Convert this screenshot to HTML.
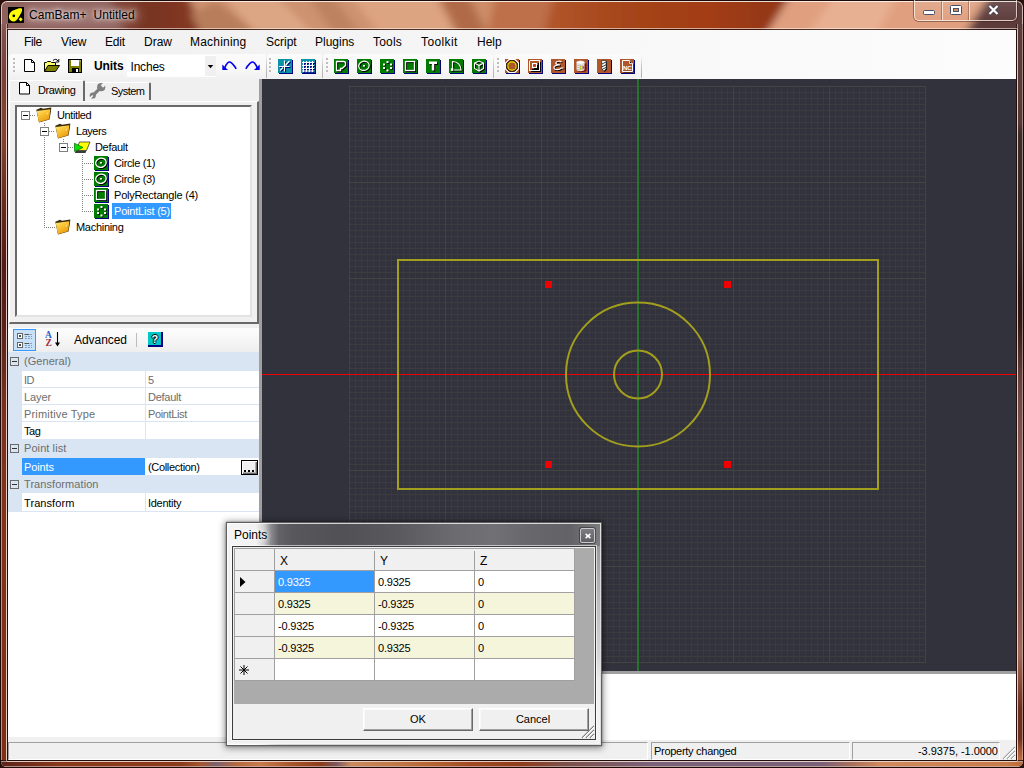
<!DOCTYPE html>
<html><head><meta charset="utf-8"><title>CamBam+ Untitled</title>
<style>
html,body{margin:0;padding:0}
body{width:1024px;height:768px;overflow:hidden;position:relative;font-family:"Liberation Sans",sans-serif;font-size:11px;color:#000;background:#2a0f0a}
.a{position:absolute}
.t{position:absolute;white-space:pre;line-height:14px}
svg{position:absolute;overflow:visible}
/* frame */
#frame{left:0;top:0;width:1022px;height:766px;border:1px solid #1c0b08;border-radius:7px 7px 6px 6px;overflow:hidden;
background:
linear-gradient(90deg,#8d5f5a 0,#8a5852 60px,#7a4436 110px,#6e3424 150px,#7c3a24 200px,#8f4a30 240px,#b47c5c 290px,#cf946f 340px,#d99d7c 400px,#e2a684 470px,#d68e66 520px,#c06a3e 560px,#ab4e22 600px,#a0431b 650px,#8f3a17 700px,#96411d 730px,#c47a52 765px,#dd9e7c 800px,#e0a283 850px,#d8946f 910px,#d08a68 960px,#7a4a44 985px,#5e3c3c 1000px,#5a3a3a 1024px);}
#frame:after{content:"";position:absolute;left:0;top:0;right:0;bottom:0;border:1px solid rgba(255,240,235,.7);border-top-color:rgba(255,250,245,.85);border-radius:6px 6px 5px 5px}
#sideL{left:1px;top:24px;width:7px;height:737px;background:linear-gradient(90deg,rgba(225,205,200,.62) 0,rgba(225,205,200,.62) 1px,transparent 1px,transparent 5px,rgba(225,205,200,.62) 5px,rgba(225,205,200,.62) 6px,rgba(40,20,16,.8) 6px),linear-gradient(180deg,#8b5c58 0,#80504a 10px,#7a4038 50px,#884230 110px,#6a2a1c 180px,#561c14 240px,#5c2218 310px,#7a3020 380px,#82341a 480px,#7e3016 737px)}
#sideR{left:1016px;top:24px;width:7px;height:737px;background:linear-gradient(90deg,rgba(40,20,16,.8) 0,rgba(40,20,16,.8) 1px,rgba(225,205,200,.55) 1px,rgba(225,205,200,.55) 2px,transparent 2px,transparent 6px,rgba(225,205,200,.55) 6px),linear-gradient(180deg,#5d3b3b 0,#5a3a39 98px,#3e2c2a 110px,#3a2826 220px,#2c1412 270px,#341815 300px,#6a4442 360px,#8a5a58 440px,#8a5450 560px,#a06a5c 630px,#8a4a38 660px,#6e2c1e 685px,#70301e 715px,#a85832 728px,#c07040 737px)}
#bot{left:1px;top:760px;width:1022px;height:7px;border-radius:0 0 6px 6px;background:
linear-gradient(180deg,rgba(40,20,16,.9) 0,rgba(40,20,16,.9) 1px,rgba(200,170,160,.8) 1px,rgba(200,170,160,.8) 2px,rgba(0,0,0,0) 2px,rgba(0,0,0,0) 6px,rgba(215,180,170,.7) 6px),
linear-gradient(90deg,#5c241b 0,#8a3a1c 60px,#8c3b1b 180px,#a3562f 200px,#7c6070 215px,#b4693f 235px,#c77a4b 260px,#a8562c 290px,#8d3d1b 320px,#7b5560 335px,#c98a5e 350px,#bf7644 400px,#b56532 430px,#a04a22 470px,#8f3d1b 520px,#7d5048 560px,#7a627a 650px,#7a6078 820px,#a8705c 850px,#d08a5c 880px,#cc8050 960px,#c87a48 1005px,#b86838 1024px)}
#client{left:8px;top:30px;width:1008px;height:730px;background:#f0f0f0}
#cedge{left:6px;top:28px;width:1010px;height:732px;border:1px solid rgba(255,240,235,.6);border-radius:2px}
#cedge2{left:7px;top:29px;width:1008px;height:730px;border:1px solid rgba(30,10,5,.75)}

/* menu */
#menubar{left:8px;top:30px;width:1008px;height:49px;background:linear-gradient(90deg,#f0f0f0 0,#f3f3f3 30%,#f8f8f8 60%,#fcfcfc 100%)}
.m{position:absolute;top:35px;font-size:12px;line-height:14px;white-space:pre;color:#000}
/* toolbars */
.tb{position:absolute;top:54px;height:24px;background:linear-gradient(180deg,#fbfbfb 0,#f8f8f8 60%,#f1f1f1 100%);border-radius:3px 3px 3px 3px}
.grip{position:absolute;top:58px;width:2px;height:14px;background:repeating-linear-gradient(180deg,#bdbdbd 0,#bdbdbd 2px,transparent 2px,transparent 4px)}
.ic{position:absolute;top:59px;width:14px;height:14px;box-shadow:1px 1px 0 #000080}
.tbs{position:absolute;top:56px;width:1px;height:22px;background:linear-gradient(180deg,rgba(190,190,190,0),#c2c2c2 50%,#b0b0b0)}
.g{background:#008000}.o{background:#b4501e}.c{background:#0090b8}

/* left panel */
.tr{position:absolute;font-size:11px;line-height:14px;white-space:pre;letter-spacing:-.3px}
.dot{position:absolute;background-image:repeating-linear-gradient(90deg,#808080 0,#808080 1px,transparent 1px,transparent 2px);height:1px}
.vdot{position:absolute;background-image:repeating-linear-gradient(180deg,#808080 0,#808080 1px,transparent 1px,transparent 2px);width:1px}
.box{position:absolute;width:7px;height:7px;border:1px solid #808080;background:#fff}
.box:after{content:"";position:absolute;left:1px;top:3px;width:5px;height:1px;background:#000}
.pg{position:absolute;font-size:11px;line-height:14px;white-space:pre;letter-spacing:-.25px}
.cat{position:absolute;left:8px;width:251px;background:#d9e5f2}
.row{position:absolute;left:22px;width:237px;background:#fff}
.pbox{position:absolute;left:10px;width:7px;height:7px;border:1px solid #6a6a6a;background:transparent}
.pbox:after{content:"";position:absolute;left:1px;top:3px;width:5px;height:1px;background:#333}

/* canvas */
#canvas{left:262px;top:79px;width:754px;height:592px;background:#32323c;overflow:hidden}
#grid{position:absolute;left:0;top:0}
.pt{position:absolute;width:7px;height:7px;background:#f00000}
/* status */
.sp{position:absolute;top:742px;height:18px;box-sizing:border-box;border:1px solid;border-color:#a0a0a0 #fff #fff #a0a0a0}
/* dialog */
.cell{position:absolute;height:21px;width:99px;background:#fff}
.alt{background:#f5f5dc}
.hd{position:absolute;background:#f0f0f0}
.dt{position:absolute;font-size:11px;line-height:14px;white-space:pre;letter-spacing:-.2px}
.btn{position:absolute;top:708px;height:23px;box-sizing:border-box;background:#f0f0f0;border:1px solid;border-color:#fff #696969 #696969 #fff;box-shadow:inset -1px -1px 0 #a0a0a0,inset 1px 1px 0 #f8f8f8;font-size:11px;line-height:20px;text-align:center}
</style></head><body>
<div id="frame" class="a"><svg style="left:0;top:0" width="1024" height="31" viewBox="0 0 1024 31"><defs><filter id="bl" x="-5%" y="-100%" width="110%" height="300%"><feGaussianBlur stdDeviation="4 3"/></filter>
<linearGradient id="gB" x1="0" x2="1"><stop offset="0" stop-color="#80453a"/><stop offset=".4" stop-color="#773322"/><stop offset="1" stop-color="#8a3b1f"/></linearGradient>
<linearGradient id="gD" x1="0" x2="1"><stop offset="0" stop-color="#b3592e"/><stop offset=".3" stop-color="#a6461b"/><stop offset=".65" stop-color="#a23c13"/><stop offset="1" stop-color="#8b3616"/></linearGradient>
</defs>
<g filter="url(#bl)">
<rect x="-30" y="-30" width="1100" height="90" fill="#8e605c"/>
<polygon points="98,-30 185,-30 215,60 135,60" fill="url(#gB)"/>
<polygon points="178,-30 560,-30 520,60 212,60" fill="#cd926f"/>
<polygon points="200,-30 250,-30 340,60 280,60" fill="#dca684"/>
<polygon points="190,14 215,0 290,60 215,60" fill="#b87e5c"/>
<polygon points="290,-30 312,-30 380,60 352,60" fill="#bd825e"/>
<polygon points="330,-30 420,-30 470,60 400,60" fill="#dda482"/>
<polygon points="425,-30 455,-30 500,60 470,60" fill="#b06a46"/>
<polygon points="460,-30 530,-30 520,60 500,60" fill="#cd8d68"/>
<polygon points="500,-30 600,-30 580,60 480,60" fill="#bd7048"/><polygon points="560,-30 805,-30 748,60 535,60" fill="url(#gD)"/>
<polygon points="805,-30 1003,-30 947,60 748,60" fill="#e0a080"/>
<polygon points="850,-30 910,-30 860,60 790,60" fill="#e8b092"/>
<polygon points="1003,-30 1060,-30 1060,60 947,60" fill="#5d3b3b"/>
</g></svg></div>
<div id="sideL" class="a"></div><div id="sideR" class="a"></div><div id="bot" class="a"></div>
<div id="cedge" class="a"></div><div id="cedge2" class="a"></div>
<div id="client" class="a"></div>

<div id="menubar" class="a"></div>
<span class="m" style="left:24px;letter-spacing:-.4px">File</span>
<span class="m" style="left:61px;letter-spacing:-.1px">View</span>
<span class="m" style="left:105px;letter-spacing:-.2px">Edit</span>
<span class="m" style="left:144px">Draw</span>
<span class="m" style="left:190px;letter-spacing:.2px">Machining</span>
<span class="m" style="left:266px">Script</span>
<span class="m" style="left:315px">Plugins</span>
<span class="m" style="left:373px;letter-spacing:.2px">Tools</span>
<span class="m" style="left:421px;letter-spacing:.4px">Toolkit</span>
<span class="m" style="left:477px">Help</span>
<!-- toolbar 1 -->
<div class="tb" style="left:9px;width:257px"></div>
<div class="tbs" style="left:266px"></div>
<div class="grip" style="left:13px"></div>
<svg style="left:24px;top:59px" width="12" height="14" viewBox="0 0 12 14"><path d="M.5.5H7.500L10.500 3.500V12.500H.5Z" fill="#fff" stroke="#000"/><path d="M7.500.500V3.500H10.500" fill="none" stroke="#000"/></svg>
<svg style="left:44px;top:58px" width="17" height="15" viewBox="0 0 17 15"><path d="M.5 13.500V4.500H2.500L3.500 3.500H6.500L7.500 4.500H11.500V7.500" fill="#ffff66" stroke="#000"/><path d="M.5 13.500L4 7.500H15.500L11.500 13.500Z" fill="#808000" stroke="#000"/><path d="M9 2.500C10.500 .8 13 1 14 3" fill="none" stroke="#000"/><path d="M14.800 1V4H11.800" fill="none" stroke="#000"/></svg>
<svg style="left:68px;top:59px" width="15" height="15" viewBox="0 0 15 15"><rect x=".5" y=".5" width="13" height="13" fill="#808000" stroke="#000"/><rect x="3" y="1" width="8" height="6" fill="#fff"/><rect x="4" y="9" width="7" height="4.500" fill="#000"/><rect x="8" y="10" width="2" height="3" fill="#fff"/><rect x="11.500" y="1.500" width="1" height="1" fill="#fff"/></svg>
<span class="m" style="left:94px;top:59px;font-weight:bold;letter-spacing:-.1px">Units</span>
<div class="a" style="left:127px;top:55px;width:89px;height:22px;background:#fff"></div>
<div class="a" style="left:205px;top:56px;width:11px;height:20px;background:#f0f0f0"></div>
<span class="m" style="left:130.500px;top:60px;letter-spacing:-.2px">Inches</span>
<svg style="left:207px;top:65px" width="7" height="4"><path d="M.7 0H6.300L3.500 3.200Z" fill="#000"/></svg>
<svg style="left:222px;top:61px" width="15" height="10" viewBox="0 0 15 10"><path d="M2.800 6.800C4.500 2.500 6.500 .3 8.500 1.200C10.500 2.200 12.500 5 14.200 7.800" fill="none" stroke="#0000f0" stroke-width="1.600"/><path d="M.3 3.500V9H6Z" fill="#0000f0"/></svg>
<svg style="left:245px;top:61px" width="15" height="10" viewBox="0 0 15 10"><path d="M12.200 6.800C10.500 2.500 8.500 .3 6.500 1.200C4.500 2.200 2.500 5 .8 7.800" fill="none" stroke="#0000f0" stroke-width="1.600"/><path d="M14.700 3.500V9H9Z" fill="#0000f0"/></svg>
<!-- toolbar 2 -->
<div class="tb" style="left:267px;width:55px"></div>
<div class="tbs" style="left:322px"></div>
<div class="grip" style="left:269px"></div>
<div class="ic" style="left:278px;background:#0a93a6"></div><svg style="left:278px;top:59px" width="14" height="14" viewBox="0 0 14 14"><g transform="translate(1,1)"><path d="M6.500 1.500V12.500M1 7.500H11.500M11.500 2L8 5.500M2 11.500L5 8.500" stroke="#000080" stroke-width="1.200" fill="none"/></g><path d="M6.500 1.500V12.500M1 7.500H11.500M11.500 2L8 5.500M2 11.500L5 8.500" stroke="#fff" stroke-width="1.200" fill="none"/><path d="M6.800 7L8 4.500L9.500 6Z" fill="#fff"/></svg>
<div class="ic" style="left:301px;background:#0a93a6"></div><svg style="left:301px;top:59px" width="14" height="14" viewBox="0 0 14 14"><g transform="translate(1,1)"><path d="M1 3.500H13M1 6.500H13M1 9.500H13M1 12H13M2.500 2V13M5.500 2V13M8.500 2V13M11.500 2V13" stroke="#000080" stroke-width="1" fill="none"/></g><path d="M1 3.500H13M1 6.500H13M1 9.500H13M1 12H13M2.500 2V13M5.500 2V13M8.500 2V13M11.500 2V13" stroke="#fff" stroke-width="1.100" fill="none"/></svg>
<!-- toolbar 3 -->
<div class="tb" style="left:323px;width:170px"></div>
<div class="tbs" style="left:493px"></div>
<div class="grip" style="left:326px"></div>
<div class="ic" style="left:334px;background:#007d00"></div><svg style="left:334px;top:59px" width="14" height="14" viewBox="0 0 14 14"><g transform="translate(1,1)"><path d="M2.500 2.500H9.500Q11.500 2.500 11.500 4.500V6.500L8 9.500H6.500V11.500H2.500Z" fill="none" stroke="#000" stroke-width="1.3"/></g><path d="M2.500 2.500H9.500Q11.500 2.500 11.500 4.500V6.500L8 9.500H6.500V11.500H2.500Z" fill="none" stroke="#fff" stroke-width="1.3"/></svg>
<div class="ic" style="left:357px;background:#007d00"></div><svg style="left:357px;top:59px" width="14" height="14" viewBox="0 0 14 14"><g transform="translate(1,1)"><ellipse cx="7" cy="6.800" rx="5.300" ry="4.600" transform="rotate(-15 7 7)" fill="none" stroke="#000" stroke-width="1.200"/></g><ellipse cx="7" cy="6.800" rx="5.300" ry="4.600" transform="rotate(-15 7 7)" fill="none" stroke="#fff" stroke-width="1.200"/><rect x="6.700" y="6.700" width="2" height="1.500" fill="#000"/><rect x="6" y="6" width="2" height="1.600" fill="#fff"/></svg>
<div class="ic" style="left:380px;background:#007d00"></div><svg style="left:380px;top:59px" width="14" height="14" viewBox="0 0 14 14"><rect x="7.3" y="2.8" width="2" height="2" fill="#000"/><rect x="10.8" y="5.3" width="2" height="2" fill="#000"/><rect x="10.8" y="8.8" width="2" height="2" fill="#000"/><rect x="7.3" y="11.3" width="2" height="2" fill="#000"/><rect x="3.8" y="8.8" width="2" height="2" fill="#000"/><rect x="3.8" y="5.3" width="2" height="2" fill="#000"/><rect x="6.5" y="2" width="2" height="2" fill="#fff"/><rect x="10" y="4.5" width="2" height="2" fill="#fff"/><rect x="10" y="8" width="2" height="2" fill="#fff"/><rect x="6.5" y="10.5" width="2" height="2" fill="#fff"/><rect x="3" y="8" width="2" height="2" fill="#fff"/><rect x="3" y="4.5" width="2" height="2" fill="#fff"/></svg>
<div class="ic" style="left:403px;background:#007d00"></div><svg style="left:403px;top:59px" width="14" height="14" viewBox="0 0 14 14"><rect x="3.500" y="3.500" width="9" height="9" fill="none" stroke="#000" stroke-width="1.200"/><rect x="2.500" y="2.500" width="9" height="9" fill="none" stroke="#fff" stroke-width="1.300"/></svg>
<div class="ic" style="left:426px;background:#007d00"></div><svg style="left:426px;top:59px" width="14" height="14" viewBox="0 0 14 14"><g transform="translate(1,1)"><path d="M3 2.500H11V5H8.200V11.500H5.800V5H3Z" fill="#000"/></g><path d="M3 2.500H11V5H8.200V11.500H5.800V5H3Z" fill="#fff"/></svg>
<div class="ic" style="left:449px;background:#007d00"></div><svg style="left:449px;top:59px" width="14" height="14" viewBox="0 0 14 14"><g transform="translate(1,1)"><path d="M3.500 11V2.500C8.500 2.500 12 6 12 11Z" fill="none" stroke="#000" stroke-width="1.2"/></g><path d="M3.500 11V2.500C8.500 2.500 12 6 12 11Z" fill="none" stroke="#fff" stroke-width="1.2"/><rect x="2.500" y="10" width="2.600" height="2.600" fill="#000"/><rect x="1.800" y="9.300" width="2.600" height="2.600" fill="#fff"/></svg>
<div class="ic" style="left:472px;background:#007d00"></div><svg style="left:472px;top:59px" width="14" height="14" viewBox="0 0 14 14"><g transform="translate(1,1)"><path d="M2.500 4L7 2L11.500 4V9.500L7 12L2.500 9.500ZM2.500 4L7 6.500L11.500 4M7 6.500V12" fill="none" stroke="#000" stroke-width="1.1"/></g><path d="M2.500 4L7 2L11.500 4V9.500L7 12L2.500 9.500ZM2.500 4L7 6.500L11.500 4M7 6.500V12" fill="none" stroke="#fff" stroke-width="1.1"/></svg>
<!-- toolbar 4 -->
<div class="tb" style="left:494px;width:147px"></div>
<div class="tbs" style="left:641px"></div>
<div class="grip" style="left:497px"></div>
<div class="ic" style="left:505px;background:#b1552a"></div><svg style="left:505px;top:59px;overflow:hidden" width="14" height="14" viewBox="0 0 14 14"><path d="M4 .6H10L13.400 4V10L10 13.400H4L.6 10V4Z" fill="none" stroke="#fff" stroke-width="1.200"/><path d="M4.500 1.800H9.500L12.200 4.500V9.500L9.500 12.200H4.500L1.800 9.500V4.500Z" fill="none" stroke="#000" stroke-width="1"/><circle cx="7" cy="7" r="4.100" fill="none" stroke="#5a3a00" stroke-width="1.900"/><circle cx="7" cy="7" r="4.100" fill="none" stroke="#ffee00" stroke-width="1.100"/></svg>
<div class="ic" style="left:528px;background:#b1552a"></div><svg style="left:528px;top:59px;" width="14" height="14" viewBox="0 0 14 14"><g shape-rendering="crispEdges"><g fill="none" stroke="#000" stroke-width="1"><path d="M12.500 2.500V12.500H2.500M9.500 5.500V9.500H5.500M10.500 3.500V10.500H3.500"/></g><g fill="none" stroke="#fff" stroke-width="1"><rect x="1.500" y="1.500" width="10" height="10"/><rect x="4.500" y="4.500" width="4" height="4"/></g><rect x="6" y="6" width="1" height="1" fill="#e02000"/><rect x="1" y="1" width="1" height="1" fill="#90a020"/></g></svg>
<div class="ic" style="left:551px;background:#b1552a"></div><svg style="left:551px;top:59px;" width="14" height="14" viewBox="0 0 14 14"><g transform="translate(.8,.8)"><path d="M10.500 3.200C9.500 1.800 5 1.800 4.800 4C4.700 5.800 8 5.800 9 6C5 5.800 2.500 7 3 9C3.500 11.500 8.500 11 10.200 9.200L12.500 8.800" fill="none" stroke="#000" stroke-width="1.200"/></g><path d="M10.500 3.200C9.500 1.800 5 1.800 4.800 4C4.700 5.800 8 5.800 9 6C5 5.800 2.500 7 3 9C3.500 11.500 8.500 11 10.200 9.200L12.500 8.800" fill="none" stroke="#fff" stroke-width="1.200"/></svg>
<div class="ic" style="left:574px;background:#b1552a"></div><svg style="left:574px;top:59px;" width="14" height="14" viewBox="0 0 14 14"><path d="M4 5V12C5 13.500 11 13.500 12.500 11.500V4.500Z" fill="#7a1208"/><path d="M2.500 3.500V10.500C2.500 12.800 10.500 12.800 10.500 10.500V3.500Z" fill="#e4e4e4"/><ellipse cx="6.500" cy="3.500" rx="4" ry="1.700" fill="#fff" stroke="#c4c4c4" stroke-width=".6"/><path d="M3 6.500H7M3 8.500H7M3 10.500H7" stroke="#bbb" stroke-width=".8"/><rect x="6" y="7" width="1.500" height="1.500" fill="#b8c800"/><rect x="6" y="9" width="1.500" height="1.500" fill="#b8c800"/><path d="M8.500 6L10.500 8.500L8.500 11Z" fill="#b1552a"/></svg>
<div class="ic" style="left:597px;background:#b1552a"></div><svg style="left:597px;top:59px;" width="14" height="14" viewBox="0 0 14 14"><path d="M5.500 2.300H10V10.300L7.800 13L5.500 10.300Z" fill="#000"/><path d="M4.700 1.500H9.200V9.700L7 12.300L4.700 9.700Z" fill="#fff" stroke="#111" stroke-width=".6"/><path d="M4.900 5L9 3M4.900 7.800L9 5.800M5.200 10.300L9 8.500" stroke="#000" stroke-width=".75"/></svg>
<div class="ic" style="left:620px;background:#b1552a"></div><svg style="left:620px;top:59px;" width="14" height="14" viewBox="0 0 14 14"><path d="M3.500 2.500H10.500L13.500 5.500V13.500H3.500Z" fill="#000"/><path d="M2.500 1.500H9.500L12.500 4.500V12.500H2.500Z" fill="#b1552a" stroke="#fff" stroke-width="1"/><path d="M9.500 1.500V4.500H12.500" fill="#000" stroke="#fff" stroke-width=".8"/><text x="3.100" y="11.200" font-family="Liberation Sans,sans-serif" font-size="6.200" font-weight="bold" fill="#fff" letter-spacing="-.2">NC</text></svg>
<!-- tabs -->
<div class="a" style="left:9px;top:101px;width:250px;height:223px;border-left:1px solid #fff;border-top:1px solid #fff;box-sizing:border-box;border-right:2px solid #696969;border-bottom:2px solid #696969"></div>
<div class="a" style="left:9px;top:80px;width:76px;height:21px;background:#f0f0f0;border-left:1px solid #fff;border-top:1px solid #fff;box-sizing:border-box;border-right:2px solid #696969;border-radius:2px 2px 0 0"></div>
<div class="a" style="left:85px;top:82px;width:66px;height:18px;border-top:1px solid #fff;box-sizing:border-box;border-right:2px solid #696969;border-radius:0 2px 0 0"></div>
<svg style="left:19px;top:82px" width="12" height="13" viewBox="0 0 12 13"><path d="M.5.500H7.500L10.500 3.500V12H.5Z" fill="#fff" stroke="#000"/><path d="M7.500.500V3.500H10.500" fill="none" stroke="#000"/></svg>
<span class="tr" style="left:38px;top:83px;letter-spacing:-.41px">Drawing</span>
<svg style="left:88.500px;top:83px;overflow:hidden" width="17" height="16" viewBox="0 0 17 16"><path d="M4 12.300L11.500 4.800" stroke="#7f7f7f" stroke-width="3.300" stroke-linecap="round"/><circle cx="3.800" cy="12.500" r="3.100" fill="#7f7f7f"/><path d="M3.300 13L-.5 16.800" stroke="#f0f0f0" stroke-width="1.700" stroke-linecap="round"/><circle cx="12.200" cy="4.200" r="4.100" fill="#7f7f7f"/><path d="M12.900 3.500L17.500 -1.100" stroke="#f0f0f0" stroke-width="3.200"/></svg>
<span class="tr" style="left:111px;top:84px;letter-spacing:-.55px">System</span>
<!-- tree -->
<div class="a" style="left:15px;top:105px;width:237px;height:212px;box-sizing:border-box;background:#fff;border:2px solid;border-color:#696969 #e3e3e3 #e3e3e3 #696969;box-shadow:-0px -0px 0 #a0a0a0"></div>
<div class="vdot" style="left:25px;top:120px;height:0"></div>
<div class="dot" style="left:30px;top:115px;width:6px"></div>
<div class="vdot" style="left:44px;top:123px;height:104px"></div>
<div class="dot" style="left:49px;top:131px;width:6px"></div>
<div class="vdot" style="left:63px;top:139px;height:4px"></div>
<div class="dot" style="left:68px;top:147px;width:6px"></div>
<div class="vdot" style="left:82px;top:155px;height:56px"></div>
<div class="dot" style="left:82px;top:163px;width:12px"></div>
<div class="dot" style="left:82px;top:179px;width:12px"></div>
<div class="dot" style="left:82px;top:195px;width:12px"></div>
<div class="dot" style="left:82px;top:211px;width:12px"></div>
<div class="dot" style="left:44px;top:227px;width:12px"></div>
<div class="box" style="left:21px;top:111px"></div>
<div class="box" style="left:40px;top:127px"></div>
<div class="box" style="left:59px;top:143px"></div>
<svg style="left:36px;top:107px" width="16" height="16" viewBox="0 0 16 16"><defs><linearGradient id="fg36107" x1="0" y1="0" x2=".6" y2="1"><stop offset="0" stop-color="#ffe98a"/><stop offset=".45" stop-color="#fbc535"/><stop offset="1" stop-color="#e99a14"/></linearGradient></defs><path d="M.3 2.800L5 .8L7 1.800L15.300 .6L15 4L13.500 12.500L3 15.600Z" fill="#3a2a0c"/><path d="M.8 4L14.300 2.200L13.200 12.200L2.800 15.300Z" fill="url(#fg36107)"/><path d="M10.500 6.500L12 5.500L11.500 7.500Z" fill="#fff3b0"/></svg><svg style="left:55px;top:123px" width="16" height="16" viewBox="0 0 16 16"><defs><linearGradient id="fg55123" x1="0" y1="0" x2=".6" y2="1"><stop offset="0" stop-color="#ffe98a"/><stop offset=".45" stop-color="#fbc535"/><stop offset="1" stop-color="#e99a14"/></linearGradient></defs><path d="M.3 2.800L5 .8L7 1.800L15.300 .6L15 4L13.500 12.500L3 15.600Z" fill="#3a2a0c"/><path d="M.8 4L14.300 2.200L13.200 12.200L2.800 15.300Z" fill="url(#fg55123)"/><path d="M10.500 6.500L12 5.500L11.500 7.500Z" fill="#fff3b0"/></svg><svg style="left:55px;top:219px" width="16" height="16" viewBox="0 0 16 16"><defs><linearGradient id="fg55219" x1="0" y1="0" x2=".6" y2="1"><stop offset="0" stop-color="#ffe98a"/><stop offset=".45" stop-color="#fbc535"/><stop offset="1" stop-color="#e99a14"/></linearGradient></defs><path d="M.3 2.800L5 .8L7 1.800L15.300 .6L15 4L13.500 12.500L3 15.600Z" fill="#3a2a0c"/><path d="M.8 4L14.300 2.200L13.200 12.200L2.800 15.300Z" fill="url(#fg55219)"/><path d="M10.500 6.500L12 5.500L11.500 7.500Z" fill="#fff3b0"/></svg>
<svg style="left:74px;top:140px" width="17" height="14" viewBox="0 0 17 14"><path d="M2 10.500H12.500L11.500 13H.8Z" fill="#3a3a3a"/><path d="M5.500 2H16L12.500 10.500H2Z" fill="#ffff00" stroke="#222" stroke-width=".7"/><path d="M.5 3.200L9 7.500L.5 11.500Z" fill="#00e400" stroke="#0a6a0a" stroke-width=".7"/></svg>
<div class="a" style="left:94px;top:156px;width:14px;height:14px;background:#007d00;box-shadow:1px 1px 0 #000080"></div><svg style="left:94px;top:156px" width="14" height="14"><g transform="translate(.9,.9)"><ellipse cx="7" cy="6.800" rx="5.300" ry="4.600" transform="rotate(-15 7 7)" fill="none" stroke="#000" stroke-width="1.300"/></g><ellipse cx="7" cy="6.800" rx="5.300" ry="4.600" transform="rotate(-15 7 7)" fill="none" stroke="#fff" stroke-width="1.300"/><rect x="6.700" y="6.700" width="2" height="1.500" fill="#000"/><rect x="6" y="6" width="2" height="1.600" fill="#fff"/></svg><div class="a" style="left:94px;top:172px;width:14px;height:14px;background:#007d00;box-shadow:1px 1px 0 #000080"></div><svg style="left:94px;top:172px" width="14" height="14"><g transform="translate(.9,.9)"><ellipse cx="7" cy="6.800" rx="5.300" ry="4.600" transform="rotate(-15 7 7)" fill="none" stroke="#000" stroke-width="1.300"/></g><ellipse cx="7" cy="6.800" rx="5.300" ry="4.600" transform="rotate(-15 7 7)" fill="none" stroke="#fff" stroke-width="1.300"/><rect x="6.700" y="6.700" width="2" height="1.500" fill="#000"/><rect x="6" y="6" width="2" height="1.600" fill="#fff"/></svg>
<div class="a" style="left:94px;top:188px;width:14px;height:14px;background:#007d00;box-shadow:1px 1px 0 #000080"></div>
<svg style="left:94px;top:188px" width="14" height="14"><rect x="3.500" y="3.500" width="9" height="9" fill="none" stroke="#000" stroke-width="1.200"/><rect x="2.500" y="2.500" width="9" height="9" fill="none" stroke="#fff" stroke-width="1.300"/></svg>
<div class="a" style="left:94px;top:204px;width:14px;height:14px;background:#007d00;box-shadow:1px 1px 0 #000080"></div>
<svg style="left:94px;top:204px" width="14" height="14"><rect x="7.3" y="2.8" width="2" height="2" fill="#000"/><rect x="10.8" y="5.3" width="2" height="2" fill="#000"/><rect x="10.8" y="8.8" width="2" height="2" fill="#000"/><rect x="7.3" y="11.3" width="2" height="2" fill="#000"/><rect x="3.8" y="8.8" width="2" height="2" fill="#000"/><rect x="3.8" y="5.3" width="2" height="2" fill="#000"/><rect x="6.5" y="2" width="2" height="2" fill="#fff"/><rect x="10" y="4.5" width="2" height="2" fill="#fff"/><rect x="10" y="8" width="2" height="2" fill="#fff"/><rect x="6.5" y="10.5" width="2" height="2" fill="#fff"/><rect x="3" y="8" width="2" height="2" fill="#fff"/><rect x="3" y="4.5" width="2" height="2" fill="#fff"/></svg>
<span class="tr" style="left:57px;top:108px;letter-spacing:-0.37px;">Untitled</span>
<span class="tr" style="left:76px;top:124px;letter-spacing:-0.46px;">Layers</span>
<span class="tr" style="left:95px;top:140px;letter-spacing:-0.32px;">Default</span>
<span class="tr" style="left:114px;top:156px;letter-spacing:-0.36px;">Circle (1)</span>
<span class="tr" style="left:114px;top:172px;letter-spacing:-0.36px;">Circle (3)</span>
<span class="tr" style="left:114px;top:188px;letter-spacing:-0.2px;">PolyRectangle (4)</span>
<div class="a" style="left:112px;top:203px;width:59px;height:16px;background:#3399ff"></div>
<span class="tr" style="left:114px;top:204px;letter-spacing:-0.21px;color:#fff">PointList (5)</span>
<span class="tr" style="left:76px;top:220px;letter-spacing:-0.29px;">Machining</span>
<!-- splitter -->
<div class="a" style="left:259px;top:79px;width:3px;height:595px;background:#a0a0a0"></div>
<!-- property grid -->
<div class="a" style="left:8px;top:324px;width:251px;height:413px;background:#fff"></div>
<div class="a" style="left:8px;top:324px;width:251px;height:4px;background:#f0f0f0"></div>
<div class="a" style="left:8px;top:328px;width:251px;height:24px;background:linear-gradient(180deg,#fdfdfd 0,#f6f6f6 50%,#eeeeee 100%)"></div>
<div class="a" style="left:13px;top:329px;width:23px;height:22px;box-sizing:border-box;border:1px solid #3399ff;background:#c9e0f9"></div>
<svg style="left:17px;top:333px" width="16" height="15" viewBox="0 0 16 15"><g fill="#fff" stroke="#666" stroke-width="1"><rect x=".5" y=".5" width="5" height="5"/><rect x=".5" y="9.500" width="5" height="5"/></g><path d="M2 3H4M3 2V4M2 12H4M3 11V13" stroke="#111" stroke-width="1"/><path d="M7.500 1.500H12M7.500 10.500H12" stroke="#555" stroke-width="1"/><path d="M8 3.500H15M8 5.500H15M8 12.500H15M8 14.500H15" stroke="#7f9fc5" stroke-width="1" stroke-dasharray="2 1"/><path d="M12.500 1.500H15M12.500 10.500H15" stroke="#7f9fc5" stroke-width="1"/></svg>
<span class="a" style="left:45px;top:331px;font:bold 9.500px 'Liberation Serif',serif;color:#2f5fd0;line-height:9px">A</span>
<span class="a" style="left:45.500px;top:339px;font:bold 9.500px 'Liberation Serif',serif;color:#9c3040;line-height:9px">Z</span>
<svg style="left:54px;top:332px" width="7" height="15"><path d="M3.500 0V13" stroke="#000" stroke-width="1.100"/><path d="M1 10.500L3.500 14.500L6 10.500Z" fill="#000"/></svg>
<span class="m" style="left:74px;top:333px;letter-spacing:-.05px">Advanced</span>
<div class="a" style="left:136px;top:333px;width:1px;height:14px;background:#bdbdbd"></div>
<div class="a" style="left:148px;top:332px;width:13px;height:13px;background:#00c8c8;box-shadow:1px 1px 0 1px #000080"></div>
<span class="a" style="left:151.500px;top:332.500px;font:bold 11px 'Liberation Sans',sans-serif;line-height:12px;color:#fff;text-shadow:1px 0 0 #000,-1px 0 0 #000,0 1px 0 #000,0 -1px 0 #000">?</span>
<div class="cat" style="top:352px;height:160px"></div>
<div class="row" style="top:371px;height:16px"></div>
<div class="row" style="top:388px;height:16px"></div>
<div class="row" style="top:405px;height:16px"></div>
<div class="row" style="top:422px;height:17px"></div>
<div class="row" style="top:458px;height:17px"></div>
<div class="row" style="top:493px;height:18px"></div>
<div class="a" style="left:145px;top:371px;width:1px;height:68px;background:#d9e5f2"></div>
<div class="a" style="left:145px;top:493px;width:1px;height:18px;background:#d9e5f2"></div>
<div class="a" style="left:22px;top:458px;width:123px;height:17px;background:#3399ff"></div>
<div class="pbox" style="top:357px"></div><div class="pbox" style="top:444px"></div><div class="pbox" style="top:480px"></div>
<span class="pg" style="left:24px;top:354px;letter-spacing:0.05px;color:#6d6d6d;">(General)</span><span class="pg" style="left:24px;top:373px;letter-spacing:-0.5px;color:#6d6d6d;">ID</span><span class="pg" style="left:148px;top:373px;letter-spacing:0px;color:#6d6d6d;">5</span><span class="pg" style="left:24px;top:390px;letter-spacing:-0.07px;color:#6d6d6d;">Layer</span><span class="pg" style="left:148px;top:390px;letter-spacing:-0.27px;color:#6d6d6d;">Default</span><span class="pg" style="left:24px;top:407px;letter-spacing:0.17px;color:#6d6d6d;">Primitive Type</span><span class="pg" style="left:148px;top:407px;letter-spacing:-0.36px;color:#6d6d6d;">PointList</span><span class="pg" style="left:24px;top:424px;letter-spacing:-0.38px;">Tag</span><span class="pg" style="left:24px;top:441px;letter-spacing:0.08px;color:#6d6d6d;">Point list</span><span class="pg" style="left:24px;top:460px;letter-spacing:-0.13px;color:#fff;">Points</span><span class="pg" style="left:148px;top:460px;letter-spacing:-0.33px;">(Collection)</span><div class="a" style="left:241px;top:460px;width:17px;height:15px;box-sizing:border-box;border:1px solid #000;background:#f0f0f0;box-shadow:inset 1px 1px 0 #fff,inset -1px -1px 0 #6a6a6a,inset -2px -2px 0 #b0b0b0"></div><div class="a" style="left:244px;top:470px;width:2px;height:2px;background:#000;box-shadow:4px 0 0 #000,8px 0 0 #000"></div><span class="pg" style="left:24px;top:477px;letter-spacing:0.07px;color:#6d6d6d;">Transformation</span><span class="pg" style="left:24px;top:496px;letter-spacing:0.08px;">Transform</span><span class="pg" style="left:148px;top:496px;letter-spacing:-0.28px;">Identity</span>
<!-- canvas -->
<div id="canvas" class="a">
<svg id="grid" width="754" height="592" shape-rendering="crispEdges"><defs><pattern id="pm" x="3" y="1" width="6" height="6" patternUnits="userSpaceOnUse"><rect x="0" y="0" width="1" height="6" fill="#39393e"/><rect x="0" y="0" width="6" height="1" fill="#3b3b40"/></pattern><pattern id="pM" x="87" y="7" width="96" height="96" patternUnits="userSpaceOnUse"><rect x="0" y="0" width="1" height="96" fill="#424241"/><rect x="0" y="0" width="96" height="1" fill="#444443"/></pattern></defs><rect x="87" y="7" width="577" height="577" fill="url(#pm)"/><rect x="87" y="7" width="577" height="577" fill="url(#pM)"/></svg>
<div class="a" style="left:375px;top:0;width:2px;height:592px;background:#27722c"></div>
<div class="a" style="left:0;top:295px;width:754px;height:1px;background:#f00000"></div>
<svg style="left:0;top:0" width="754" height="592"><g fill="none" stroke="#a29e1e" stroke-width="2"><rect x="136" y="181" width="480" height="229"/><circle cx="376" cy="295.500" r="72"/><circle cx="376" cy="295.500" r="24"/></g></svg>
<div class="pt" style="left:283px;top:202px"></div><div class="pt" style="left:462px;top:202px"></div>
<div class="pt" style="left:283px;top:382px"></div><div class="pt" style="left:462px;top:382px"></div>
</div>
<div class="a" style="left:259px;top:671px;width:757px;height:3px;background:#a0a0a0"></div>
<div class="a" style="left:259px;top:674px;width:757px;height:66px;background:#fff"></div>
<!-- status bar -->
<div class="sp" style="left:8px;width:640px"></div>
<div class="sp" style="left:651px;width:199px"></div>
<div class="sp" style="left:852px;width:148px"></div>
<span class="dt" style="left:654px;top:744px;letter-spacing:-.28px">Property changed</span>
<span class="dt" style="left:918px;top:744px;letter-spacing:-.05px">-3.9375, -1.0000</span>
<svg style="left:1002px;top:746px" width="13" height="13"><path d="M1 13L13 1M5 13L13 5M9 13L13 9" stroke="#a0a0a0" stroke-width="1.200"/><path d="M2 13L13 2M6 13L13 6M10 13L13 10" stroke="#fff" stroke-width="1"/></svg>

<!-- dialog -->
<div class="a" style="left:226px;top:522px;width:376px;height:224px;box-sizing:border-box;border:1px solid #5f5f5f;box-shadow:0 1px 7px 1px rgba(0,0,0,.45), 0 0 2px rgba(0,0,0,.4);
background:linear-gradient(90deg,#f4f4f4 0,#f2f2f2 29px,#cfcfd1 37px,#8a8a8e 44px,#626267 52px,#57575c 66px,#505055 114px,#59595e 171px,#6b6b70 228px,#707075 266px,#66666b 305px,#626267 343px,#7c7c80 372px)"></div>
<div class="a" style="left:227px;top:523px;width:374px;height:222px;box-sizing:border-box;border:1px solid rgba(255,255,255,.75)"></div>
<div class="a" style="left:228px;top:546px;width:4px;height:198px;background:#f2f2f2"></div>
<div class="a" style="left:228px;top:740px;width:372px;height:4px;background:linear-gradient(180deg,#e9e9e9,#f6f6f6)"></div>
<div class="a" style="left:596px;top:546px;width:4px;height:198px;background:linear-gradient(180deg,#9a9a9e 0,#b8b8bb 50px,#d6d6d8 110px,#eeeeee 135px,#f4f4f4 100%)"></div>
<div class="a" style="left:231px;top:545px;width:366px;height:196px;box-sizing:border-box;border:1px solid rgba(255,255,255,.6)"></div>
<div class="a" style="left:232px;top:546px;width:364px;height:194px;box-sizing:border-box;border:1px solid #3c3c3c;background:#f0f0f0"></div>
<span class="m" style="left:234px;top:528px;letter-spacing:0px;text-shadow:0 0 6px #fff,0 0 4px #fff">Points</span>
<div class="a" style="left:580px;top:528px;width:15px;height:15px;box-sizing:border-box;border:1px solid #c9c9cc;border-radius:2px;box-shadow:0 0 0 1px rgba(40,40,40,.55);background:linear-gradient(180deg,#7d7d82,#5e5e63)"></div>
<svg style="left:585px;top:533px" width="6" height="6"><path d="M.6 .8L5.400 5.200M5.400 .8L.6 5.200" stroke="#fff" stroke-width="1.600"/></svg>
<!-- grid -->
<div class="a" style="left:234px;top:548px;width:360px;height:156px;background:#ababab"></div>
<div class="a" style="left:234px;top:548px;width:341px;height:133px;background:#a0a0a0"></div>
<div class="hd" style="left:235px;top:549px;width:39px;height:21px"></div>
<div class="hd" style="left:275px;top:549px;width:99px;height:21px"></div>
<div class="hd" style="left:375px;top:549px;width:99px;height:21px"></div>
<div class="hd" style="left:475px;top:549px;width:99px;height:21px"></div>
<div class="a" style="left:374px;top:549px;width:1px;height:2px;background:#f0f0f0"></div>
<div class="a" style="left:474px;top:549px;width:1px;height:2px;background:#f0f0f0"></div>
<span class="dt" style="left:280px;top:554px;font-size:12px">X</span>
<span class="dt" style="left:380px;top:554px;font-size:12px">Y</span>
<span class="dt" style="left:480px;top:554px;font-size:12px">Z</span>
<div class="hd" style="left:235px;top:571px;width:39px;height:21px"></div><div class="cell" style="left:275px;top:571px;background:#3399ff;"></div><span class="dt" style="left:278px;top:575px;color:#fff;">0.9325</span><div class="cell" style="left:375px;top:571px;"></div><span class="dt" style="left:378px;top:575px;">0.9325</span><div class="cell" style="left:475px;top:571px;"></div><span class="dt" style="left:478px;top:575px;">0</span><div class="hd" style="left:235px;top:593px;width:39px;height:21px"></div><div class="cell alt" style="left:275px;top:593px;"></div><span class="dt" style="left:278px;top:597px;">0.9325</span><div class="cell alt" style="left:375px;top:593px;"></div><span class="dt" style="left:378px;top:597px;">-0.9325</span><div class="cell alt" style="left:475px;top:593px;"></div><span class="dt" style="left:478px;top:597px;">0</span><div class="hd" style="left:235px;top:615px;width:39px;height:21px"></div><div class="cell" style="left:275px;top:615px;"></div><span class="dt" style="left:278px;top:619px;">-0.9325</span><div class="cell" style="left:375px;top:615px;"></div><span class="dt" style="left:378px;top:619px;">-0.9325</span><div class="cell" style="left:475px;top:615px;"></div><span class="dt" style="left:478px;top:619px;">0</span><div class="hd" style="left:235px;top:637px;width:39px;height:21px"></div><div class="cell alt" style="left:275px;top:637px;"></div><span class="dt" style="left:278px;top:641px;">-0.9325</span><div class="cell alt" style="left:375px;top:637px;"></div><span class="dt" style="left:378px;top:641px;">0.9325</span><div class="cell alt" style="left:475px;top:637px;"></div><span class="dt" style="left:478px;top:641px;">0</span><div class="hd" style="left:235px;top:659px;width:39px;height:21px"></div><div class="cell" style="left:275px;top:659px;"></div><div class="cell" style="left:375px;top:659px;"></div><div class="cell" style="left:475px;top:659px;"></div>
<svg style="left:240px;top:577px" width="6" height="10"><path d="M0 0L5.500 5L0 10Z" fill="#000"/></svg>
<svg style="left:239px;top:665px" width="10" height="10"><path d="M5 0V10M0 5H10M1.500 1.500L8.500 8.500M8.500 1.500L1.500 8.500" stroke="#000" stroke-width="1"/></svg>
<div class="btn" style="left:363px;width:110px">OK</div>
<div class="btn" style="left:479px;width:110px;padding-right:2px">Cancel</div>
<svg style="left:581px;top:725px" width="13" height="13"><path d="M1 13L13 1M5 13L13 5M9 13L13 9" stroke="#808080" stroke-width="1.300"/><path d="M2 13L13 2M6 13L13 6M10 13L13 10" stroke="#fff" stroke-width="1"/></svg>
<!-- title -->
<div class="a" style="left:22px;top:5px;width:120px;height:20px;border-radius:10px;background:rgba(255,235,235,.16);filter:blur(5px)"></div>
<div class="a" style="left:8px;top:7px;width:16px;height:16px;background:#000"></div>
<svg style="left:8px;top:7px" width="16" height="16" viewBox="0 0 16 16"><path d="M1 8.500C1.500 5.500 4 3.500 7 2.800C9.500 1.500 12 .7 13.800 1.500C14.800 3 13.500 5.500 12 8C10.500 10.500 9.500 13 7 14.200C4.500 15 2.500 13.800 1.500 12C.8 10.800 .8 9.500 1 8.500Z" fill="#ffff00"/><circle cx="5.800" cy="8.800" r="1.400" fill="#000"/><path d="M12.700 10.300L14.700 12.300L12.700 14.500L10.700 12.300Z" fill="#ffff00"/></svg>
<span class="m" style="left:29px;top:8px;letter-spacing:.08px;text-shadow:0 0 5px rgba(255,255,255,.8),0 0 8px rgba(255,255,255,.6),0 0 3px rgba(255,255,255,.5)">CamBam+  Untitled</span>
<!-- caption buttons -->
<div class="a" style="left:914px;top:0px;width:103px;height:21px;box-sizing:border-box;border:1px solid rgba(255,245,240,.75);border-top:none;border-radius:0 0 5px 5px;box-shadow:0 0 0 1px rgba(60,25,15,.45);background:linear-gradient(180deg,rgba(255,255,255,.12),rgba(255,255,255,.02))"></div>
<div class="a" style="left:942px;top:1px;width:1px;height:19px;background:rgba(255,245,240,.7);box-shadow:-1px 0 0 rgba(60,25,15,.3)"></div>
<div class="a" style="left:969px;top:1px;width:1px;height:19px;background:rgba(255,245,240,.7);box-shadow:-1px 0 0 rgba(60,25,15,.3)"></div>
<div class="a" style="left:923px;top:10px;width:12px;height:5px;box-sizing:border-box;border:1px solid #45506a;border-radius:1.500px;background:#fff"></div>
<div class="a" style="left:950px;top:5px;width:12px;height:10px;box-sizing:border-box;border:1px solid #45506a;border-radius:1.500px;background:#fff"></div>
<div class="a" style="left:953px;top:8px;width:6px;height:4px;box-sizing:border-box;border:1px solid #45506a;background:#d98a60"></div>
<svg style="left:988px;top:5px" width="11" height="10" viewBox="0 0 11 10"><path d="M1.500 1L9.500 9M9.500 1L1.500 9" stroke="#3c4258" stroke-width="3.600"/><path d="M1.500 1L9.500 9M9.500 1L1.500 9" stroke="#fff" stroke-width="2.200"/></svg>
</body></html>
